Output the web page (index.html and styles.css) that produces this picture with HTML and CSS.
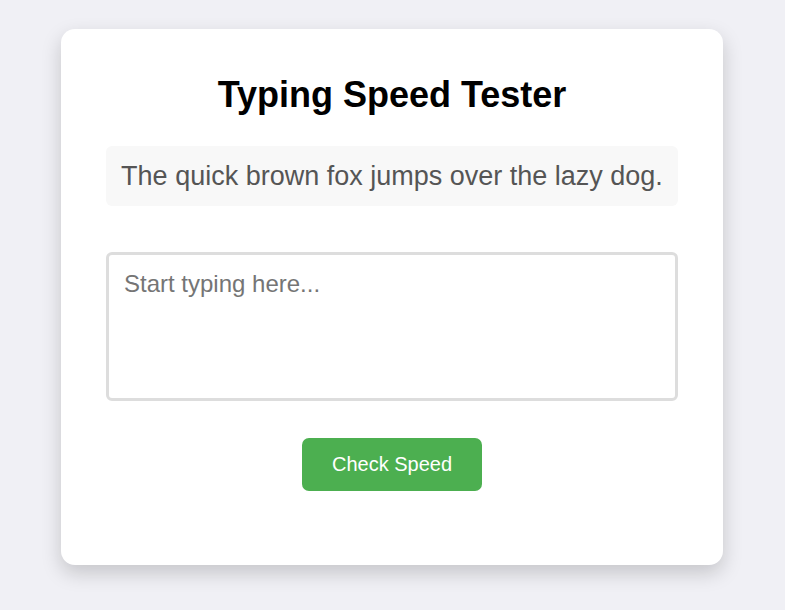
FILE: index.html
```html
<!DOCTYPE html>
<html>
<head>
<meta charset="utf-8">
<link rel="stylesheet" href="styles.css">
</head>
<body>
<div class="card">
  <h1 class="title">Typing Speed Tester</h1>
  <div class="sample">The quick brown fox jumps over the lazy dog.</div>
  <textarea class="input" placeholder="Start typing here..."></textarea>
  <div class="actions">
    <button class="btn">Check Speed</button>
  </div>
</div>
</body>
</html>
```
FILE: styles.css
```css
html, body {
  margin: 0;
  padding: 0;
}
html {
  background: #f0f0f5;
  min-height: 100%;
}
body {
  background: #f0f0f5;
  font-family: "Liberation Sans", Arial, sans-serif;
  padding: 29px 1px 0 0;
  min-height: 100vh;
  box-sizing: border-box;
}
.card {
  width: 662px;
  height: 536px;
  box-sizing: border-box;
  margin: 0 auto;
  background: #fff;
  border-radius: 14px;
  box-shadow: 0 8px 20px rgba(0, 0, 0, 0.18);
  padding: 44px 45px 0;
  display: flex;
  flex-direction: column;
}
.title {
  margin: 0;
  font-size: 36px;
  line-height: 44px;
  font-weight: bold;
  text-align: center;
  color: #000;
}
.sample {
  margin-top: 29px;
  height: 60px;
  background: #f8f8f8;
  border-radius: 6px;
  color: #555;
  font-size: 27px;
  display: flex;
  align-items: center;
  justify-content: center;
}
.input {
  margin-top: 46px;
  height: 149px;
  box-sizing: border-box;
  width: 100%;
  border: 3px solid #ddd;
  border-radius: 6px;
  padding: 15px 15px;
  font-family: "Liberation Sans", Arial, sans-serif;
  font-size: 24px;
  resize: none;
  outline: none;
}
.input::placeholder {
  color: #757575;
}
.actions {
  margin-top: 37px;
  display: flex;
  justify-content: center;
}
.btn {
  width: 180px;
  height: 53px;
  background: #4caf50;
  color: #fff;
  border: none;
  border-radius: 7px;
  font-family: "Liberation Sans", Arial, sans-serif;
  font-size: 20px;
}
```
